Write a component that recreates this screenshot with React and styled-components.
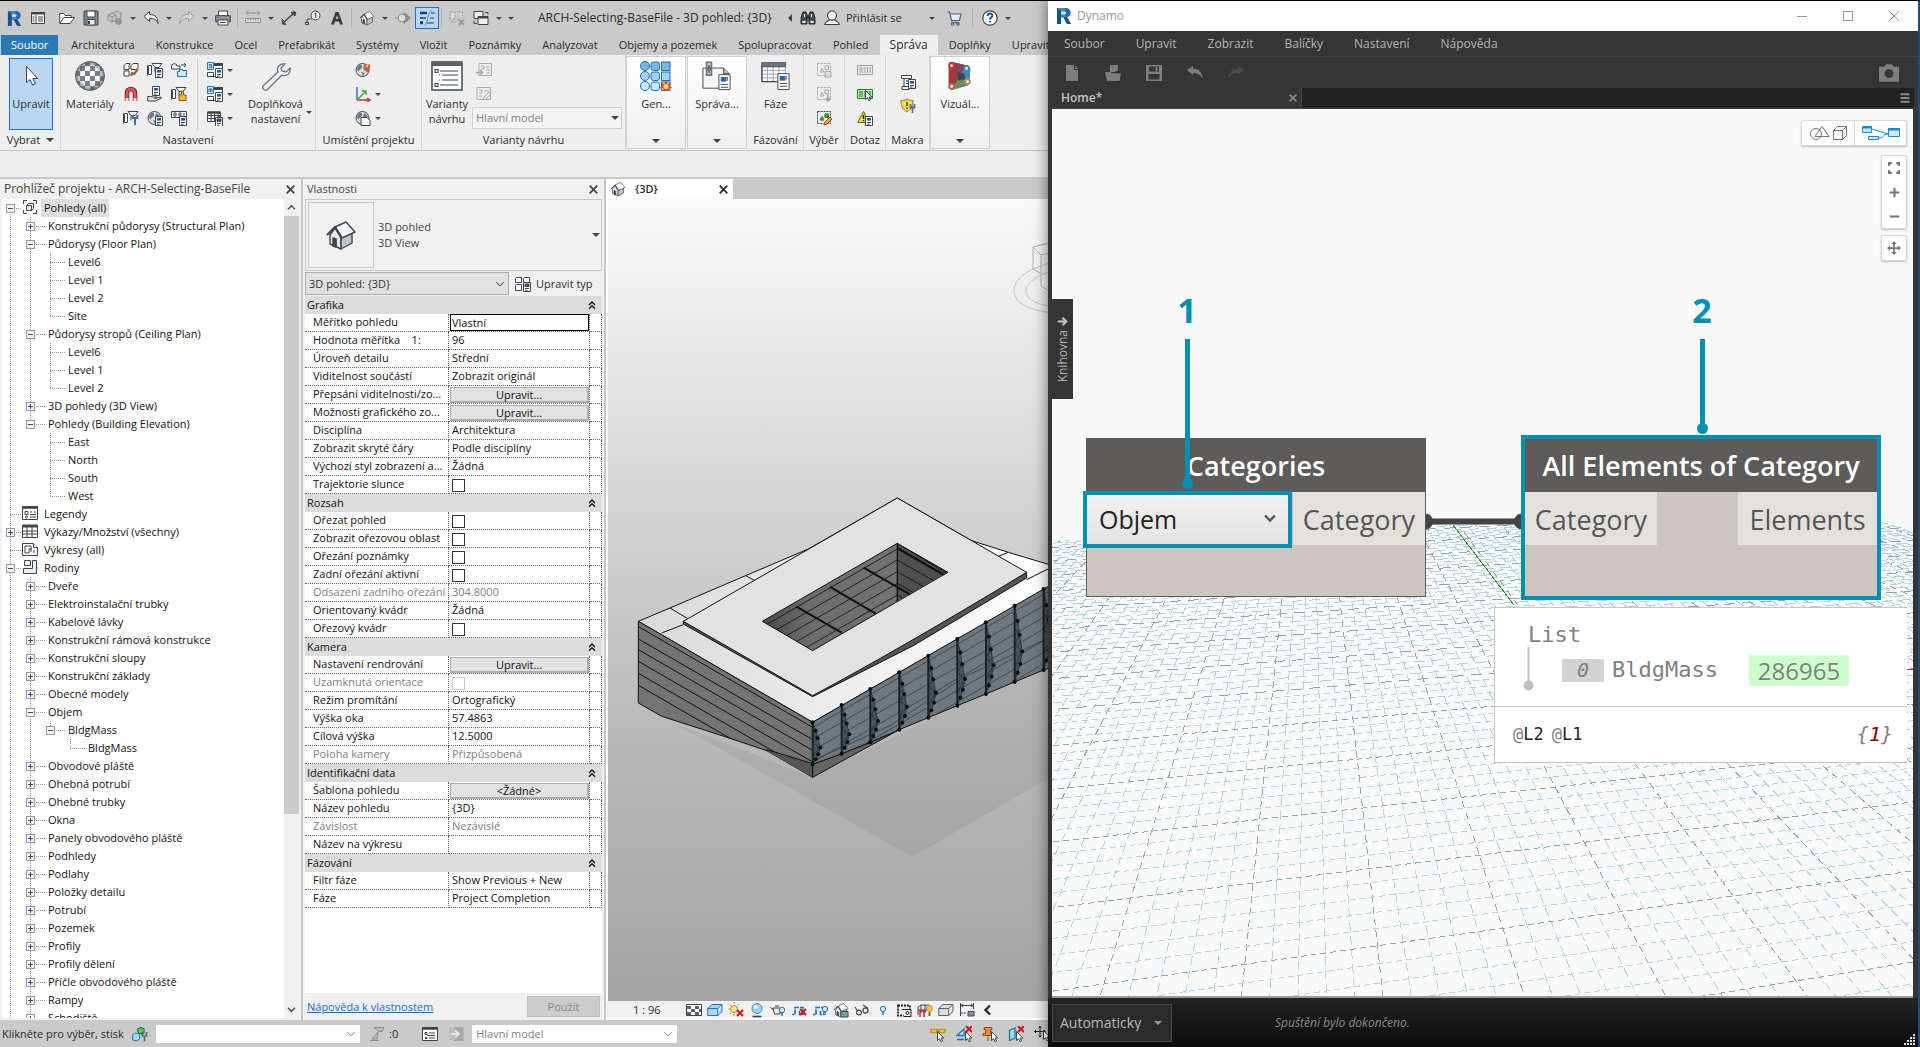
import React, { useState } from 'react';
import styled, { createGlobalStyle, css } from 'styled-components';

const INK = '#3d444d';
const TEAL = '#0490b4';

const GlobalStyle = createGlobalStyle`
  * {
    box-sizing: border-box;
  }
  body {
    margin: 0;
    background: #000;
    font-family: 'Open Sans', 'Noto Sans', sans-serif;
    font-size: 11px;
    line-height: 16px;
    color: #2b2b2b;
  }
  button, input, select {
    font: inherit;
    color: inherit;
  }
  button {
    margin: 0;
    padding: 0;
    border: 0;
    background: none;
    white-space: nowrap;
  }
  svg {
    display: block;
    flex: none;
  }
`;

/* ---------- icons ---------- */

const Badge = ({ x = 8, y = 6 }) => (
  <g transform={`translate(${x} ${y})`}>
    <path d="M.5.5h7v9h-7z" fill="#fff" stroke={INK} />
    <path d="M2 2h4v2.6H2z" fill="#1d5c9e" />
    <path d="M2 6.5h4M2 8.2h2.5" stroke={INK} />
  </g>
);

const Cursor = ({ x = 7, y = 5 }) => (
  <path transform={`translate(${x} ${y})`} d="M.5.5v9l2-1.8 1.4 3 1.6-.7-1.4-2.9h2.7z" fill="#fff" stroke={INK} />
);

const Duct = () => (
  <g fill="#fff" stroke={INK}>
    <path d="M1.5 3.5h3v9h-3zM5 1.5h10l-3 4H8z" />
    <path d="M.5 3.5v10M8 5.5v5" />
  </g>
);

const RedX = ({ x = 9, y = 6 }) => (
  <path transform={`translate(${x} ${y})`} d="M0 0l6 6M6 0l-6 6" stroke="#c8171e" strokeWidth="2" />
);

const Globe = () => (
  <g>
    <circle cx="7.5" cy="8" r="6.500" fill="#dfe3e8" stroke={INK} />
    <path d="M2 6c2-4 6-4 5-1s-3 3-4 5zM9 3l4 3-2 3-3-2zM6 10l4 1-2 3z" fill="#6b7782" />
  </g>
);

const Bulb = ({ x = 9, y = 3 }) => (
  <g transform={`translate(${x} ${y})`}>
    <circle cx="3" cy="3" r="2.700" fill="#d5ecfb" stroke="#1b75bb" />
    <path d="M2 6h2v3H2z" fill="#4a9bd4" />
  </g>
);

const Dashed = ({ c, children }) => (
  <g fill="none" stroke={c}>
    <path d="M1.5 1.5h13v12h-13z" strokeDasharray="2 1" />
    <path d="M4 10l2-3.5L8 10zM9 4h3.5v3.5H9z" />
    {children}
  </g>
);

const SheetS = ({ m }) => (
  <g>
    <path d="M5 1.5h10.5v13H5" fill="#fff" stroke={INK} />
    <path d="M5 1h11v3H5z" fill={INK} />
    <path d="M.5.5h6v7h-6z" fill="#cfe4f7" stroke="#2b71b8" />
    <path d={m ? 'M2 6V3h3v3M3.5 3v3' : 'M5 2.5H2.3V4H5v1.700H2'} fill="none" stroke="#2b71b8" />
    <path d="M.5 10.5h6v4h-6z" fill="#fff" stroke={INK} />
    <Badge x={8} y={6} />
  </g>
);

const House = () => (
  <g stroke={INK} strokeWidth=".7" strokeLinejoin="round">
    <path d="M2.500 8v4.500l5.500 2.500V9.500L5 4.500z" fill="#e4e8ec" />
    <path d="M8 9.500V15l5.500-3V6.500z" fill="#bcc4cc" />
    <path d="M5 4L10.500 1.500 15 6.500 8.500 9.500z" fill="#f8f9fa" />
    <path d="M1 8l4-4 3.500 5.500" fill="none" strokeWidth="1" />
    <path d="M4 9.500v4l1.600.6V10z" fill={INK} />
  </g>
);

const Cube = ({ f = '#a9d6f3', s = '#1b75bb' }) => (
  <g fill={f} stroke={s}>
    <path d="M.7 6.500h10v7H.7zM.7 6.500L5 2.500h10l-4.300 4zM10.700 13.500L15 9.500v-7" />
  </g>
);

const Clamp = () => <path d="M1 12.500h2M4 12.500v-7h8v7h-3.500v-3.500" fill="none" stroke="#2272b4" strokeWidth="1.700" strokeDasharray="5 1" />;

const Barcode = ({ c, f }) => (
  <g fill={f} stroke={c}>
    <path d="M.5 3.500h15v9H.5z" />
    <path d="M3 5v6M5 5v6M8 5v6M10.500 5v6M13 5v6" />
  </g>
);

const PICTURES = {
  revit: (
    <g>
      <path d="M1 0h8c7 0 7 8 2 9l4 7h-4L7.500 9.500H5V16H1z" fill="#3f83c5" />
      <path d="M5 3.500h4c2 0 2 3 0 3H5z" fill="#cfe0f0" />
      <path d="M1 0l4 3.500V16H1zM5 9.500h2.500L11 16h4l-4-7z" fill="#1d4f86" />
      <path d="M9 0c7 0 7 8 2 9l-2-2.500c2-1 2-2.500 0-3z" fill="#2768ab" />
    </g>
  ),
  ui: <g fill="#fff" stroke={INK}><path d="M1.500 2.500h13v11h-13z" /><path d="M1 3.500h14" strokeWidth="2" /><path d="M6 5v8M2.500 7h2M2.500 9h2M2.500 11h2M8 7h5M8 9h5M8 11h5" /></g>,
  open: <g fill="#fff" stroke={INK}><path d="M.7 13V3.500h4l1.500 2h6V7.500" /><path d="M.7 13.500L5 7.500h10.500L11 13.500z" /></g>,
  save: <g stroke={INK}><path d="M1 1h14v14H1z" fill="#7f8994" /><path d="M4 1h8v6H4z" fill="#fff" /><path d="M4 9.500h8V15H4z" fill="#eee" /><path d="M6 11v3" strokeWidth="2" /></g>,
  cubes: <g fill="#c4c4c4" stroke="#8f8f8f"><path d="M1 5l4-2 4 2v5l-4 2-4-2zM1 5l4 2 4-2M5 7v5M6 3l4-2 4 2v5l-3 1.500" /><circle cx="11.500" cy="11.500" r="3" fill="#999" /></g>,
  undo: <path d="M1 6.500L6.500 1.500V4.500c6 0 8.500 3 8.500 9-1.500-4-4-5-8.500-5v3z" fill="#eee" stroke={INK} strokeLinejoin="round" />,
  redo: <path d="M15 6.500L9.500 1.500V4.500C3.500 4.500 1 7.500 1 13.500c1.500-4 4-5 8.500-5v3z" fill="#d8d8d8" stroke="#9a9a9a" strokeLinejoin="round" />,
  print: <g stroke={INK}><path d="M3.500 1h9v5h-9z" fill="#fff" /><path d="M.7 5.700h14.600v6H.7z" fill="#8b949e" /><path d="M3 10h10v5H3z" fill="#fff" /><path d="M5 12.500h6" /></g>,
  dims: <g fill="none" stroke="#8f8f8f"><path d="M1 3h14M3.500 1L1 3l2.500 2M12.500 1L15 3l-2.500 2" /><path d="M.5 8.500h15v4H.5zM3 8.500v2M5.500 8.500v2M8 8.500v2M10.500 8.500v2M13 8.500v2" fill="#ddd" /></g>,
  aligned: <g fill={INK} stroke={INK}><path d="M3 12L12 4" strokeWidth="1.500" /><path d="M1 10.500l4 4-3.500-.5zM14.500 2L10 2.500l4 3.500z" /><path d="M.5 8.500l3 3M12 .5l3 3" /></g>,
  tag: <g fill="none" stroke={INK}><circle cx="10.500" cy="5.500" r="4.500" fill="#eee" /><path d="M9.500 4l1.300-1v5M7 9l-5 0v4" /><path d="M.5 12.500h3v2h-3z" /></g>,
  letterA: <path d="M2 14.500L6.500 2h3L14 14.500h-3L10 11.500H6l-1 3zM6.800 9h2.400L8 5z" fill="#3a3a3a" />,
  house: <House />,
  section: <g fill="#bbb" stroke="#8b8b8b"><path d="M9 2.500L15.500 8 9 13.500z" fill="#8b8b8b" /><circle cx="7" cy="8" r="4" fill="#ddd" /><path d="M0 8h3" /></g>,
  thin: <g fill="none" stroke="#303c49"><path d="M1 2.500h7M1 3.500h7M1 8h6M1 12h3M1 13.500h3" strokeWidth="1.600" /><path d="M12 3h4M11 8h4M8 13h7" /><path d="M12.500.5c-5 4-2 8-6.500 15" stroke="#2f8be0" /></g>,
  hidden: <g fill="#ddd" stroke="#999"><path d="M1 2h5v7H1zM8.500 2h5v4M2 12h5M9 8v2" strokeDasharray="3 1" /><path d="M10 10l5 5M15 10l-5 5" strokeWidth="1.800" /></g>,
  windows: <g fill="#eee" stroke={INK}><path d="M1 1.500h9v7H1z" /><path d="M5 6.500h10v8H5z" /><path d="M5 7.500h10" strokeWidth="2" /><path d="M12 2.500h3v2M1 10.500v3h3" fill="none" /></g>,
  binoc: <g fill="#454c56" stroke="#22262c"><path d="M3 2h3l1 3v9H1V8z" /><path d="M13 2h-3L9 5v9h6V8z" /><path d="M6.500 6h3v3h-3z" /><path d="M2.500 11h3v2h-3zM10.500 11h3v2h-3zM4 4h1v3H4zM11 4h1v3h-1z" fill="#fff" stroke="none" /></g>,
  user: <g fill="#f4f4f4" stroke={INK} strokeWidth="1.200"><path d="M.8 14.500c0-3 3-3 4.500-4.500h5.400c1.500 1.500 4.500 1.500 4.500 4.500z" /><circle cx="8" cy="5.500" r="4.500" /></g>,
  cart: <g fill="#e6ecf6" stroke="#4d5b7c" strokeWidth="1.200"><path d="M1 2h2.500l2 8.500h8L15 4H4" /><path d="M5 12.500h8" /><circle cx="6.500" cy="14" r="1.200" /><circle cx="12" cy="14" r="1.200" /></g>,
  help: <g><circle cx="8" cy="8" r="7.200" fill="#fff" stroke={INK} strokeWidth="1.200" /><path d="M5.500 6c0-3.500 5.500-3 4.800 0C10 7.500 8 7.500 8 9.500M8 11v1.600" fill="none" stroke="#1f55b0" strokeWidth="2" /></g>,
  brush: <g fill="#fff" stroke={INK}><path d="M1 3.500l2-2h4l-1 2v4H1zM8 3.500l2-2h5v4l-2 2H8zM1 9h5v5H1z" /><path d="M8 14l1-3 2 1 4-5" stroke="#a3601e" strokeWidth="2.200" fill="#a3601e" /></g>,
  ductBadge: <g><Duct /><Badge /></g>,
  transfer: <g fill="#cfe6f8" stroke={INK}><path d="M.5 7V3l3-1.500L6 3v1h3v3z" fill="#eee" /><path d="M10 3h5M13 1l2 2-2 2" fill="none" /><path d="M6.500 14.500v-5h2v-2h3v1h4v6z" stroke="#1b75bb" /></g>,
  magnet: <g fill="none"><path d="M4 15V7a4 4 0 018 0v8" stroke="#5a2224" strokeWidth="4.500" /><path d="M4 15V7a4 4 0 018 0v8" stroke="#e05050" strokeWidth="2.800" /><path d="M2.500 13.500h3M10.500 13.500h3" stroke="#f4f4f4" strokeWidth="2.500" /></g>,
  hand: <g><Badge x={5} y={0} /><path d="M.7 10.500h3l3 .5h3l-2 1.500 6-1.500 1 1-6 3H.7z" fill="#d9dee4" stroke={INK} /></g>,
  ductBrush: <g><Duct /><path d="M10.500 5h2v4h2.500v5.500h-7V9h2.500z" fill="#f3b93b" stroke="#8c5d0a" /></g>,
  ductWrench: <g><Duct /><path d="M12 15V9M9.800 5v3h4.500V5" fill="none" stroke="#3b6fa5" strokeWidth="2" /></g>,
  globeBadge: <g><Globe /><Badge /></g>,
  money: <g><path d="M.5 1.500h15v6H.5z" fill="#fff" stroke={INK} /><path d="M3 3v3h2V3zM8 3v3h2V3zM13 3v3" fill="none" stroke={INK} /><Badge /></g>,
  sheetS: <SheetS />,
  sheetM: <SheetS m />,
  gridChart: <g stroke={INK} fill="#fff"><path d="M.5 2.500h13v9H.5zM.5 5.500h13M.5 8.500h13M4 2.500v9M7.500 2.500v9M11 2.500v9" /><path d="M.5 2.500h13" strokeWidth="2.500" /><path d="M12 14V6" stroke="#2468c8" strokeWidth="2" /><path d="M15 14V9" stroke="#d12c2c" strokeWidth="2" /><Badge y={7} /></g>,
  globePin: <g><Globe /><path d="M9 2.500h6V6l-3 5-3-5z" fill="#e8562a" /><circle cx="12" cy="4" r="1" fill="#fff" /></g>,
  axes: <g fill="none" strokeWidth="1.400"><path d="M2 1v13" stroke="#2a62b8" /><path d="M2 14h13M12 12l3 2-3 2" stroke="#d92a2a" /><path d="M2 14L11 5M11 9V5H7" stroke="#2eae36" /></g>,
  globeSheet: <g><Globe /><path d="M6 7.500h6l3 3v5H6z" fill="#fff" stroke={INK} /></g>,
  optAdd: <g fill="#eee" stroke="#aaa"><path d="M3 1.500h12.500v12H3zM5 4h3v3H5M10 5h4M10 8h4M10 11h4" /><path d="M0 10.500h6M4 8l2.500 2.500L4 13" strokeWidth="1.600" /></g>,
  optPick: <g fill="#eee" stroke="#aaa"><path d="M1 1.500h13.500v12H1zM3 4h3v3H3M8 5h5M3 10h3" /><path d="M7 14l1-3 5-5 2 2-5 5z" /></g>,
  selSave: <Dashed c="#a5a5a5"><path d="M9 9.500h6v5.500H9z" fill="#ddd" /></Dashed>,
  selLoad: <Dashed c="#a5a5a5"><path d="M12 8.500v6M9.500 12l2.500 3 2.500-3" strokeWidth="1.800" /></Dashed>,
  selEdit: <g><Dashed c="#3a3f45" /><path d="M4 10l2-3.500L8 10zM9 4h3.500v3.500H9z" fill="#2b9c2e" /><path d="M8 15l1-3 5-5 2 2-5 5z" fill="#f2a23a" stroke="#a5451c" /></g>,
  idGrey: <Barcode c="#a0a0a0" f="#e8e8e8" />,
  idGreen: <g><Barcode c="#1d8a20" f="#b9e8b5" /><Cursor x={8} y={4} /></g>,
  warn: <g><path d="M6.500 1.500l6 11H.7z" fill="#f7dd4a" stroke="#6b5b10" /><path d="M6.500 5v4M6.500 10v1.200" stroke="#222" strokeWidth="1.500" /><Badge x={8} y={6} /></g>,
  macro: <g><path d="M1.500 1.500h10v3H4v8h5v3H2v-3h2M1.500 1.500v3H4M6 7h3M6 9.500h2" fill="#fff" stroke={INK} /><Badge x={8} y={5} /></g>,
  shield: <g><path d="M7 1c-2 1.500-4 1.500-6 1.500 0 6 2 9 6 11.500 4-2.500 6-5.500 6-11.500C11 2.500 9 2.500 7 1z" fill="#f8dc55" stroke="#8d7a2a" /><path d="M7 4v4M7 9.500v1.500" stroke="#444" strokeWidth="1.700" /><path d="M12.500 15v-5M10.500 6v3.500h4V6" fill="none" stroke="#55708d" strokeWidth="1.800" /></g>,
  views: <g fill="none" stroke={INK}><path d="M1.500 5V1.500H5M11 1.500h3.500V5M14.500 11v3.500H11M5 14.500H1.500V11" /><path d="M4.500 6.500h5v5h-5zM4.500 6.500l2-2h5v5l-2 2" fill="#eef1f4" /></g>,
  legend: <g fill="#fff" stroke={INK}><path d="M.5 1.500h15v13H.5z" /><path d="M.5 2.500h15" strokeWidth="2.500" /><path d="M3 6.500h3v3H3zM8 7h2M12 7h2M8 9.500h6M8 12h6" /><circle cx="4.500" cy="12" r="1" /></g>,
  schedule: <g fill="#fff" stroke={INK}><path d="M.5 2.500h15v12H.5zM.5 8h15M.5 11h15M5 4v10M10 4v10" /><path d="M.5 3h15" strokeWidth="3" /></g>,
  sheet: <g fill="#fff" stroke={INK}><path d="M.5 2.500h11l4 4v8H.5z" /><path d="M3 5h6v6M3 5v7h4V8h3M11.500 2.500v4h4M12 9v3" /></g>,
  family: <g fill="#eef1f4" stroke={INK}><path d="M2.500 1.500h6v5h-6zM10.500 1.500h4v13h-13v-5h9z" /></g>,
  typeEdit: <g fill="#fff" stroke={INK}><path d="M.5 2.500l1-1h5v5h-6zM8.500 2.500l1-1h5v5h-6zM.5 9.500l1-1h5v6h-6z" /><Badge y={6} /></g>,
  worksets: <g><path d="M5 3.500l3-2 4 1v5H7z" fill="#5fbf63" stroke="#1d6b22" /><path d="M.7 8.500l3-1.500 4 1v5l-3 2-4-1z" fill="#a9d6f3" stroke="#1b75bb" /><path d="M12.500 15.500V10M10.500 6v4h4V6" fill="none" stroke="#55708d" strokeWidth="1.700" /></g>,
  filter: <g fill="#bbb" stroke="#8b8b8b"><path d="M5 1.500h10l-2 4h-3zM9 6l-6 7h5z" /><path d="M1 14.500h9" /></g>,
  options: <g fill="#fff" stroke={INK}><path d="M.5 1.500h15v13H.5z" /><path d="M.5 2.500h15" strokeWidth="2.500" /><path d="M3 6.500h2v2H3zM7 7h6M5 9.500h8M3 11.500h2v1H3M7 12h6" /></g>,
  addTo: <g><path d="M3 1h12.500v14H6z" fill="#a8a8a8" /><path d="M1 1h6v13H1z" fill="#bcbcbc" /><path d="M3 8h7M7 4.500l4 3.500-4 3.500" stroke="#e8e8e8" strokeWidth="1.800" /></g>,
  detail: <g><path d="M.5 2.500h15v11H.5z" fill="#fff" stroke={INK} /><path d="M1 4h4v3H1zM9 4h4v3H9zM5 7h4v3H5zM1 10h4v3H1zM9 10h4v3H9zM13 7h2v3h-2z" fill="#5a636d" /></g>,
  style: <Cube />,
  sun: <g><circle cx="6" cy="7" r="3.500" fill="#fbe58a" stroke="#c98412" /><path d="M6 0v2M6 12v2M0 7h1.500M1.500 2.500l1.500 1M10 3l1-1M2 12l1-1" stroke="#c98412" /><RedX x={9} y={8} /></g>,
  render: <g><circle cx="8" cy="6.500" r="5" fill="#9fd0f2" stroke="#3a8ac6" /><circle cx="6.500" cy="5" r="2" fill="#eaf6fd" /><path d="M3.500 14.500h9" stroke={INK} strokeWidth="1.600" /></g>,
  teapot: <g><path d="M3 6h7v6H4.500zM.5 5L4 9M5 4h4" fill="#eee" stroke={INK} /><Bulb x={9} y={5} /></g>,
  cropX: <g><Clamp /><RedX x={9} y={7} /></g>,
  crop: <g><Clamp /><Bulb x={10} y={4} /></g>,
  lock: <g><House /><path d="M8 9.500h7V15H8z" fill="#7fa39a" stroke="#30524a" /></g>,
  glasses: <g fill="#dceaf4" stroke={INK} strokeWidth="1.100"><path d="M1 5l3 5M9 3l5 3" /><circle cx="5" cy="10.500" r="2.400" /><circle cx="11.500" cy="8.500" r="2.600" /></g>,
  bulb: <Bulb x={5} y={4} />,
  temp: <g fill="none" stroke="#222"><path d="M2 3.500h12v10H2z" strokeDasharray="2 1" strokeWidth="1.800" /><path d="M6 7.500h9v7H8" fill="#eee" /><circle cx="11.500" cy="11" r="1.500" /></g>,
  analytic: <g fill="none" stroke={INK}><path d="M1 13V5l3-2h8v3M4 3v8M8 3v8M1 8h9" /><path d="M3 15V8M7 15V8M3 9h6" stroke="#c9202a" strokeWidth="1.500" /><circle cx="12.500" cy="6.500" r="3" fill="#ffc54a" stroke="#d8851b" /><path d="M12.500 10v4" stroke="#666" strokeWidth="2" /></g>,
  displace: <Cube f="#d8dde2" s="#5a636d" />,
  constraint: <g fill="none" stroke={INK}><path d="M1.500 1v13M14.500 1v6M2 3.500h12M4 2L2 3.500 4 5M12 2l2 1.500L12 5" /><path d="M2 11h6" strokeDasharray="2 1" /><path d="M9 9.500h6V14H9z" fill="#8a939c" /></g>,
  linkSel: <g><path d="M1 3.500h6v3H1zM9 3.500h6v3H9zM6 5h4" fill="#f6d34c" stroke="#c3960f" strokeWidth="1.500" /><Cursor x={7} y={5} /></g>,
  underlay: <g><path d="M1 9.500L8 3v6.500zM1 13.500h7" fill="#cfe6f8" stroke="#1b75bb" strokeWidth="1.300" /><RedX x={10} y={0} /><Cursor x={9} y={5} /></g>,
  pinSel: <g><path d="M2 1.500h8v2H8.500v4H11v2H1v-2h2.500v-4H2zM6 10v5" fill="#f08a3a" stroke="#9c4514" /><Cursor x={9} y={5} /></g>,
  faceSel: <g><path d="M1.500 4.500L7 2v10l-5.500 2.500z" fill="#a9d6f3" stroke="#1b75bb" strokeWidth="1.300" /><RedX x={10} y={0} /><Cursor x={8} y={5} /></g>,
  dragSel: <g><path d="M6 0v11M.5 5.500h11M4.500 2L6 .5 7.500 2M4.500 9.500L6 11l1.500-1.500M2 4L.5 5.500 2 7M10 4l1.500 1.500" fill="none" stroke="#222" /><Cursor x={9} y={4} /></g>,
  chevron: <path d="M2 5l6 6 6-6" fill="none" stroke="currentColor" strokeWidth="1.600" />,
  up: <path d="M3 10.500l5-5 5 5" fill="none" stroke="currentColor" strokeWidth="2.400" />,
  down: <path d="M3 5.500l5 5 5-5" fill="none" stroke="currentColor" strokeWidth="2.400" />,
  left: <path d="M10 3.500L5.500 8l4.500 4.500" fill="none" stroke="currentColor" strokeWidth="2.400" />,
  close: <path d="M2.500 2.500l11 11M13.500 2.500l-11 11" stroke="currentColor" strokeWidth="2.600" />,
  collapse: <path d="M4 8l4-4 4 4M4 13l4-4 4 4" fill="none" stroke="#111" strokeWidth="1.800" />,
  newFile: <path d="M2 0h8v5h4v11H2zM11 0l3 4h-3z" fill="#7d7d7d" />,
  openFile: <path d="M5 0h8v5l-3 2H5zM0 7h5l2 1 9 .5-1.500 7.500H2z" fill="#7d7d7d" />,
  disk: <path d="M0 0h16v16H0zM3 1.500v5h10v-5zM2.500 9v5.500h11V9zM9.500 2h2v4h-2z" fill="#7d7d7d" fillRule="evenodd" />,
  undoD: <path d="M0 5l6-4v2.500c6 0 9 4 10 10.500-3-5-6-6-10-6V10z" fill="#7d7d7d" />,
  redoD: <path d="M16 5l-6-4v2.500C4 3.500 1 7.500 0 14c3-5 6-6 10-6V10z" fill="#4b4b4b" />,
  camera: <path d="M0 3h4l2-2h4l2 2h4v12H0zM8 5a3.500 3.500 0 100 7 3.500 3.500 0 000-7z" fill="#7d7d7d" fillRule="evenodd" />,
  burger: <path d="M2 3h12M2 8h12M2 13h12" stroke="#8a8a8a" strokeWidth="2.400" />,
  fit: <path d="M1.500 5V1.500H5M11 1.500h3.500V5M14.500 11v3.500H11M5 14.500H1.500V11" fill="none" stroke="#757575" strokeWidth="3" />,
  plus: <path d="M8 1v14M1 8h14" stroke="#757575" strokeWidth="3" />,
  minus: <path d="M1 8h14" stroke="#757575" strokeWidth="3" />,
  pan: <g stroke="#757575" fill="#757575"><path d="M8 3v10M3 8h10" strokeWidth="2" /><path d="M8 0l3 3.500H5zM8 16l3-3.500H5zM0 8l3.500-3v6zM16 8l-3.500-3v6z" stroke="none" /></g>,
  winMin: <path d="M3 8.500h10" stroke="#999" />,
  winMax: <path d="M3.500 3.500h9v9h-9z" fill="none" stroke="#999" />,
  winClose: <path d="M3 3l10 10M13 3L3 13" stroke="#999" />,
  arrow: <path d="M1 8h12M8 2.500L13.500 8 8 13.500" fill="none" stroke="#c5c5c5" strokeWidth="3" />,
};

const Icon = ({ name, size = 16 }) => (
  <svg width={size} height={size} viewBox="0 0 16 16" fill="none" aria-hidden="true">
    {PICTURES[name]}
  </svg>
);

const Materials = () => (
  <svg width="30" height="30" viewBox="0 0 30 30">
    <defs>
      <pattern id="checker" width="10" height="10" patternUnits="userSpaceOnUse">
        <rect width="10" height="10" fill="#f7f8f9" />
        <path d="M0 0h5v5H0zM5 5h5v5H5z" fill="#77818c" />
      </pattern>
      <radialGradient id="ball">
        <stop offset=".6" stopColor="#555" stopOpacity="0" />
        <stop offset="1" stopColor="#555" stopOpacity=".7" />
      </radialGradient>
    </defs>
    <circle cx="15" cy="15" r="14.500" fill="url(#checker)" stroke="#6a727b" />
    <circle cx="15" cy="15" r="14.500" fill="url(#ball)" />
  </svg>
);

const BigPictures = {
  pointer: (
    <svg width="30" height="30" viewBox="0 0 30 30">
      <path d="M10.500 5.500v16l3.500-3 2.500 5.500 2.800-1.200-2.400-5.300h4.600z" fill="#fff" stroke={INK} />
    </svg>
  ),
  materials: <Materials />,
  wrench: (
    <svg width="30" height="30" viewBox="0 0 30 30">
      <path d="M2 25L17 11c-2-5 2-9 7-8l-4 4 1 3 4 1 4-4c1 5-3 9-8 7L6 29c-3 1-5-2-4-4z" fill="#eef0f2" stroke="#6a727b" strokeWidth="1.300" />
    </svg>
  ),
  variants: (
    <svg width="32" height="30" viewBox="0 0 32 30">
      <path d="M1 1h30v28H1z" fill="#fff" stroke={INK} strokeWidth="1.500" />
      <path d="M1 3h30" stroke="#5a636d" strokeWidth="4" />
      <path d="M4 8.500h3v3H4zM4 22.500h3v3H4zM9 10h18M9 24h18M11 14h16M11 19h16M8 14h1M8 19h1" fill="none" stroke={INK} strokeWidth="1.200" />
    </svg>
  ),
  gen: (
    <svg width="32" height="30" viewBox="0 0 32 30">
      <g stroke="#1a6fb5">
        {[0, 1, 2].map((r) => (
          <g key={r} fill={['#79b7df', '#a4d2ef', '#c9e9fa'][r]}>
            <circle cx="5" cy={5 + r * 10} r="4.500" />
            <rect x="11" y={1 + r * 10} width="8.500" height="8.500" rx="2.500" />
            <rect x="21.500" y={1 + r * 10} width="8.500" height="8.500" />
          </g>
        ))}
      </g>
      <path d="M26 19l1.500 4 4-1.500-2 3.500 3 2-4 .5.500 4-3-2.500-3 2.500.5-4-4-.5 3-2-2-3.500 4 1.500z" fill="#e8411c" />
      <circle cx="26" cy="25.500" r="2.500" fill="#ffe14c" />
    </svg>
  ),
  manage: (
    <svg width="32" height="32" viewBox="0 0 32 32">
      <path d="M1 7.500h22l6 6V29H1z" fill="#f7f7f7" stroke={INK} />
      <path d="M23 7.500v6h6" fill="#bbb" stroke={INK} />
      <path d="M5 1.500h5v6H5zM5 9h5v6H5zM7.500 4v9" fill="none" stroke="#6a727b" strokeWidth="2" />
      <path d="M18 14.500h12v16H18z" fill="#fff" stroke={INK} />
      <path d="M20 17h6v5h-6z" fill="#2565a8" />
      <path d="M20 25h8M20 28h8M27 17v4" stroke={INK} />
    </svg>
  ),
  phase: (
    <svg width="32" height="32" viewBox="0 0 32 32">
      <path d="M1 2.500h25V22H1zM1 10h25M1 14h25M1 18h25M7 6v16M13 6v16M19 6v16" fill="#fff" stroke="#9aa1a8" />
      <path d="M1 2h25v4H1zM1 2v20h17" fill="none" stroke={INK} strokeWidth="1.300" />
      <path d="M1 2h25v4H1z" fill="#6a727b" />
      <path d="M18 13.500h12v17H18z" fill="#fff" stroke={INK} />
      <path d="M20 16h6v5h-6z" fill="#2565a8" />
      <path d="M20 24h8M20 27h8M27 16v4" stroke={INK} />
    </svg>
  ),
  dynamo: (
    <svg width="28" height="32" viewBox="0 0 28 32">
      <path d="M3 1h3l17 4 2 3-1 14-2 4-17 5-3-2V3z" fill="#4b4f5e" />
      <path d="M2 3l3-2 8 15L5 31l-3-2z" fill="#a6383d" />
      <path d="M5 1l18 4-10 10z" fill="#8b4160" />
      <path d="M22 5l3 3-1 15-11-8z" fill="#3a8fae" />
      <path d="M13 17l11 6-2 3-17 5z" fill="#6f8a5a" />
      <path d="M11 12l7 1 2 6-8 2z" fill="#3c4454" />
      <g fill="#fff" strokeWidth="2">
        <circle cx="5" cy="5" r="2.500" stroke="#c9333c" />
        <circle cx="21" cy="8" r="2.500" stroke="#2f8fb4" />
        <circle cx="22" cy="22" r="2.500" stroke="#a09555" />
        <circle cx="5" cy="27" r="2.500" stroke="#b06a5d" />
      </g>
    </svg>
  ),
};

/* ---------- shared parts ---------- */

const Caret = styled.i`
  display: block;
  flex: none;
  width: 0;
  height: 0;
  border: ${(p) => p.$size || 3}px solid transparent;
  border-top-color: #444;
  border-bottom: 0;
`;

const IconButton = styled.button`
  display: grid;
  place-items: center;
  flex: none;
  width: ${(p) => p.$w || 24}px;
  height: 24px;
  ${(p) =>
    p.$active &&
    css`
      height: 22px;
      border: 1px solid #1a6fd0;
      background: #b9d7f3;
    `}
`;

const Separator = styled.i`
  width: 1px;
  height: 20px;
  margin: 0 3px 0 2px;
  background: #b2b2b2;
`;

const Spacer = styled.i`
  flex: ${(p) => (p.$w ? `0 0 ${p.$w}px` : '1 1 0')};
`;

const SelectFrame = styled.div`
  position: relative;
  flex: none;
  width: ${(p) => p.$w}px;
  height: ${(p) => p.$h || 18}px;
  background: ${(p) => p.$bg || '#fff'};
  border: 1px solid ${(p) => p.$line || '#fff'};
  color: ${(p) => p.$color || '#808080'};

  select {
    display: block;
    width: 100%;
    height: 100%;
    padding: 0 20px 0 3px;
    appearance: none;
    border: 0;
    background: none;
    outline: 0;
  }
  svg, i {
    position: absolute;
    right: 3px;
    top: calc(50% - 5px);
    pointer-events: none;
  }
  i {
    right: 2px;
    top: calc(50% - 2px);
  }
`;

const DropDown = ({ label, value, caret, ...rest }) => (
  <SelectFrame {...rest}>
    <select aria-label={label} defaultValue={value}>
      <option>{value}</option>
    </select>
    {caret ? <Caret $size={4} /> : <Icon name="chevron" size={10} />}
  </SelectFrame>
);

/* ---------- Revit window ---------- */

const Desktop = styled.div`
  display: grid;
  grid-template-columns: minmax(0, 131fr) minmax(0, 109fr);
  height: 100vh;
  min-height: 700px;
  padding-top: 1px;
`;

const Revit = styled.div`
  display: flex;
  flex-direction: column;
  min-height: 0;
  overflow: hidden;
  background: #cacaca;
`;

const QuickBar = styled.header`
  display: flex;
  align-items: center;
  flex: none;
  height: 34px;
  padding-left: 2px;
  white-space: nowrap;
  overflow: hidden;
`;

const WindowTitle = styled.span`
  width: 246px;
  font-size: 12px;
`;

const Tabs = styled.nav`
  display: flex;
  gap: 1px;
  flex: none;
  height: 20px;
  padding-left: 1px;
  overflow: hidden;
`;

const Tab = styled.button`
  flex: none;
  padding: 0 10px;
  font-size: ${(p) => (p.$current ? 12 : 11)}px;
  ${(p) => p.$file && 'background: #2a7ab5; color: #fff; margin-right: 2px;'}
  ${(p) => p.$current && 'background: #efefef;'}
`;

const Ribbon = styled.div`
  display: flex;
  flex: none;
  height: 96px;
  padding-left: 1px;
  background: #eee;
  border-bottom: 1px solid #c6c6c6;
  overflow: hidden;
`;

const Panel = styled.section`
  display: flex;
  flex-direction: column;
  flex: none;
  width: ${(p) => p.$w}px;
  border-right: 1px solid #d6d6d6;
  ${(p) =>
    p.$raised &&
    css`
      margin: 1px 1px 1px 0;
      border: 1px solid #cfcfcf;
      background: linear-gradient(#fff, #efefef);
    `}
`;

const PanelBody = styled.div`
  display: flex;
  flex: 1;
  padding-top: ${(p) => (p.$raised ? 1 : 3)}px;
`;

const PanelLabel = styled.div`
  display: flex;
  align-items: center;
  justify-content: center;
  gap: 6px;
  height: 19px;
  padding-bottom: 2px;
  white-space: nowrap;
`;

const RaisedMenu = styled(PanelLabel)`
  padding: 5px 0 0;
`;

const BigButton = styled.button`
  display: flex;
  flex-direction: column;
  align-items: center;
  gap: 5px;
  flex: ${(p) => (p.$w ? `0 0 ${p.$w}px` : 1)};
  padding-top: 3px;
  line-height: 15px;
  white-space: pre-line;
  ${(p) =>
    p.$active &&
    css`
      margin: 0 7px 1px 8px;
      padding-top: 2px;
      border: 1px solid #1a6fd0;
      background: #b9d7f3;
    `}
  svg {
    height: 30px;
  }
`;

const SmallGrid = styled.div`
  display: grid;
  grid-template-columns: repeat(${(p) => p.$cols || 1}, 24px);
  grid-auto-rows: 24px;
  align-content: start;
  ${(p) => p.$center && 'margin: 0 auto;'}
  ${(p) => p.$lower && 'padding-top: 12px;'}
`;

const SplitGrid = styled(SmallGrid)`
  grid-template-columns: 24px 8px;
  align-items: center;
  margin-left: ${(p) => p.$ml}px;
`;

const Divider = styled.i`
  width: 1px;
  height: 72px;
  margin: 0 5px 0 6px;
  background: #cfcfcf;
`;

const VariantTools = styled.div`
  display: flex;
  flex-direction: column;
  gap: 1px;
`;

const CaretSlot = styled.span`
  align-self: flex-end;
  margin: 0 3px 17px 0;
`;

const Strip = styled.div`
  flex: none;
  height: 28px;
  background: #eee;
  border-bottom: 2px solid #c8c8c8;
`;

const Workspace = styled.div`
  display: grid;
  grid-template-columns: 303px 303px minmax(0, 1fr);
  flex: 1;
  min-height: 0;
`;

const Dock = styled.section`
  display: flex;
  flex-direction: column;
  min-height: 0;
  padding: 0 2px;
  background: #f0f0f0;
  border-right: 2px solid #c8c8c8;
`;

const DockTitle = styled.header`
  display: flex;
  align-items: center;
  justify-content: space-between;
  flex: none;
  height: 20px;
  padding: 0 3px 0 2px;
  font-size: ${(p) => (p.$wide ? 12 : 11)}px;
  color: #444;
`;

const TreeArea = styled.div`
  display: flex;
  flex: 1;
  min-height: 0;
  margin-bottom: 2px;
  background: #fff;
`;

const Tree = styled.ul`
  flex: 1;
  margin: 0;
  padding: 0;
  list-style: none;
  overflow: hidden;
  color: #111;
`;

const TreeRow = styled.li`
  display: flex;
  height: 18px;
  line-height: 18px;
  white-space: nowrap;
`;

const dots = (dir) => `repeating-linear-gradient(${dir}, #999 0 1px, transparent 1px 2px)`;

const Guide = styled.span`
  flex: none;
  width: ${(p) => p.$w}px;
  padding: 5px 0 0 4px;
  background-repeat: no-repeat;
  background-position: 8px ${(p) => (p.$first ? 9 : 0)}px, 8px 9px;
  background-size: 1px ${(p) => (p.$half ? 9 : 18)}px, ${(p) => (p.$branch ? p.$w - 8 : 0)}px 1px;
  background-image: ${(p) => (p.$line ? dots('180deg') : 'none')}, ${dots('90deg')};
`;

const Toggle = styled.button`
  display: block;
  width: 9px;
  height: 9px;
  border: 1px solid #9a9a9a;
  background:
    linear-gradient(#2f4a9a, #2f4a9a) center / 5px 1px no-repeat,
    linear-gradient(#2f4a9a, #2f4a9a) center / 1px ${(p) => (p.$open ? 0 : 5)}px no-repeat,
    #f4f4f4;
`;

const TreeText = styled.span`
  padding: 0 3px;
  margin-left: ${(p) => (p.$icon ? 3 : 0)}px;
  background: ${(p) => (p.$selected ? '#dedede' : 'none')};
`;

const ScrollTrack = styled.div`
  display: flex;
  flex-direction: column;
  align-items: center;
  flex: none;
  width: 15px;
  background: #f0f0f0;
  color: #555;
`;

const ScrollArrow = styled.button`
  display: grid;
  place-items: center;
  width: 15px;
  height: 17px;
`;

const ScrollThumb = styled.i`
  flex: 0 0 73%;
  width: 15px;
  margin-bottom: auto;
  background: #cbcbcb;
`;

const TREE = [
  [0, '-', 'Pohledy (all)', 'views'],
  [1, '+', 'Konstrukční půdorysy (Structural Plan)'],
  [1, '-', 'Půdorysy (Floor Plan)'],
  [2, '', 'Level6'],
  [2, '', 'Level 1'],
  [2, '', 'Level 2'],
  [2, '', 'Site'],
  [1, '-', 'Půdorysy stropů (Ceiling Plan)'],
  [2, '', 'Level6'],
  [2, '', 'Level 1'],
  [2, '', 'Level 2'],
  [1, '+', '3D pohledy (3D View)'],
  [1, '-', 'Pohledy (Building Elevation)'],
  [2, '', 'East'],
  [2, '', 'North'],
  [2, '', 'South'],
  [2, '', 'West'],
  [0, '', 'Legendy', 'legend'],
  [0, '+', 'Výkazy/Množství (všechny)', 'schedule'],
  [0, '', 'Výkresy (all)', 'sheet'],
  [0, '-', 'Rodiny', 'family'],
  [1, '+', 'Dveře'],
  [1, '+', 'Elektroinstalační trubky'],
  [1, '+', 'Kabelové lávky'],
  [1, '+', 'Konstrukční rámová konstrukce'],
  [1, '+', 'Konstrukční sloupy'],
  [1, '+', 'Konstrukční základy'],
  [1, '+', 'Obecné modely'],
  [1, '-', 'Objem'],
  [2, '-', 'BldgMass'],
  [3, '', 'BldgMass'],
  [1, '+', 'Obvodové pláště'],
  [1, '+', 'Ohebná potrubí'],
  [1, '+', 'Ohebné trubky'],
  [1, '+', 'Okna'],
  [1, '+', 'Panely obvodového pláště'],
  [1, '+', 'Podhledy'],
  [1, '+', 'Podlahy'],
  [1, '+', 'Položky detailu'],
  [1, '+', 'Potrubí'],
  [1, '+', 'Pozemek'],
  [1, '+', 'Profily'],
  [1, '+', 'Profily dělení'],
  [1, '+', 'Příčle obvodového pláště'],
  [1, '+', 'Rampy'],
  [1, '+', 'Schodiště'],
];

// true when another row of the same level follows under the same parent
const continues = (index, level) => {
  for (let i = index + 1; i < TREE.length; i += 1) {
    if (TREE[i][0] < level) return false;
    if (TREE[i][0] === level) return true;
  }
  return level < 2;
};

const ProjectTree = () => (
  <Tree>
    {TREE.map(([level, toggle, text, icon], i) => (
      <TreeRow key={i}>
        {Array.from({ length: level + 1 }, (_, col) => {
          const own = col === level;
          const more = continues(i, col);
          return (
            <Guide key={col} $w={own && level ? 23 : 20} $line={own || more} $half={own && !more} $first={i === 0} $branch={own}>
              {own && toggle && <Toggle $open={toggle === '-'} aria-label={text} />}
            </Guide>
          );
        })}
        {icon && <Icon name={icon} />}
        <TreeText $icon={icon} $selected={i === 0}>{text}</TreeText>
      </TreeRow>
    ))}
  </Tree>
);

const TypeBox = styled.div`
  display: flex;
  align-items: center;
  flex: none;
  height: 72px;
  padding: 2px 1px 2px 2px;
  border: 1px solid #c8c8c8;
  color: #444;
`;

const TypeThumb = styled.div`
  display: grid;
  place-items: center;
  width: 66px;
  height: 66px;
  margin-right: 4px;
  border: 1px solid #c8c8c8;
`;

const TypeRow = styled.div`
  display: flex;
  align-items: center;
  flex: none;
  height: 25px;
`;

const EditType = styled.button`
  display: flex;
  align-items: center;
  gap: 5px;
  margin-left: 6px;
`;

const TableArea = styled.div`
  flex: 1;
  min-height: 0;
  overflow: hidden;
  background: #fff;
`;

const PropTable = styled.table`
  width: 100%;
  table-layout: fixed;
  border-collapse: separate;
  border-spacing: 0;
  color: #111;
  white-space: nowrap;

  td, th {
    height: 18px;
    padding: 0;
    text-align: left;
    vertical-align: top;
    font-weight: 400;
    line-height: 16px;
    overflow: hidden;
  }
`;

const GroupHead = styled.th`
  background: #dcdcdc;

  div {
    display: flex;
    align-items: center;
    justify-content: space-between;
    height: 18px;
    padding: 0 4px 0 2px;
  }
`;

const PropRow = styled.tr`
  color: ${(p) => (p.$dim ? '#808080' : '#111')};

  th, td {
    border-bottom: 1px dotted #666;
    border-right: 1px dotted #666;
  }
  th {
    padding-left: 8px;
  }
  td:nth-child(2) {
    padding-left: ${(p) => (p.$flush ? 1 : 3)}px;
  }
`;

const ValueInput = styled.input`
  display: block;
  width: 100%;
  height: 17px;
  padding: 0 1px;
  border: 1px solid #000;
`;

const ValueButton = styled.button`
  display: block;
  width: 100%;
  height: 16px;
  margin-top: 1px;
  line-height: 14px;
  background: #e1e1e1;
  border: 1px solid #adadad;
  border-bottom-width: 2px;
  border-right-width: 2px;
`;

const Check = styled.input`
  display: block;
  appearance: none;
  width: 13px;
  height: 13px;
  margin: 3px 0 0;
  border: 1px solid #333;
  background: #fff;

  &:disabled {
    border-color: #ccc;
  }
`;

const DockFooter = styled.footer`
  display: flex;
  align-items: center;
  justify-content: space-between;
  flex: none;
  height: 27px;
  padding: 0 2px;

  a {
    color: #0f6fd0;
  }
`;

const ApplyButton = styled.button`
  width: 73px;
  height: 21px;
  background: #ccc;
  border: 1px solid #bfbfbf;
  color: #868686;
`;

const PROPS = [
  ['Grafika', [
    ['Měřítko pohledu', 'input', 'Vlastní'],
    ['Hodnota měřítka\u00a0\u00a0\u00a0 1:', 'text', '96'],
    ['Úroveň detailu', 'text', 'Střední'],
    ['Viditelnost součástí', 'text', 'Zobrazit originál'],
    ['Přepsání viditelnosti/zo...', 'button', 'Upravit...'],
    ['Možnosti grafického zo...', 'button', 'Upravit...'],
    ['Disciplína', 'text', 'Architektura'],
    ['Zobrazit skryté čáry', 'text', 'Podle disciplíny'],
    ['Výchozí styl zobrazení a...', 'text', 'Žádná'],
    ['Trajektorie slunce', 'check'],
  ]],
  ['Rozsah', [
    ['Ořezat pohled', 'check'],
    ['Zobrazit ořezovou oblast', 'check'],
    ['Ořezání poznámky', 'check'],
    ['Zadní ořezání aktivní', 'check'],
    ['Odsazení zadního ořezání', 'text', '304.8000', true],
    ['Orientovaný kvádr', 'text', 'Žádná'],
    ['Ořezový kvádr', 'check'],
  ]],
  ['Kamera', [
    ['Nastavení rendrování', 'button', 'Upravit...'],
    ['Uzamknutá orientace', 'check', '', true],
    ['Režim promítání', 'text', 'Ortografický'],
    ['Výška oka', 'text', '57.4863'],
    ['Cílová výška', 'text', '12.5000'],
    ['Poloha kamery', 'text', 'Přizpůsobená', true],
  ]],
  ['Identifikační data', [
    ['Šablona pohledu', 'button', '<Žádné>'],
    ['Název pohledu', 'text', '{3D}'],
    ['Závislost', 'text', 'Nezávislé', true],
    ['Název na výkresu', 'text', ''],
  ]],
  ['Fázování', [
    ['Filtr fáze', 'text', 'Show Previous + New'],
    ['Fáze', 'text', 'Project Completion'],
  ]],
];

const PropValue = ({ id, kind, value, dim }) => {
  if (kind === 'input') return <ValueInput id={id} defaultValue={value} />;
  if (kind === 'button') return <ValueButton id={id}>{value}</ValueButton>;
  if (kind === 'check') return <Check id={id} type="checkbox" disabled={dim} />;
  return value;
};

const PropertyTable = () => (
  <PropTable>
    <colgroup>
      <col style={{ width: 144 }} />
      <col />
      <col style={{ width: 12 }} />
    </colgroup>
    {PROPS.map(([group, rows], g) => (
      <tbody key={group}>
        <tr>
          <GroupHead colSpan={3}>
            <div>{group}<Icon name="collapse" size={12} /></div>
          </GroupHead>
        </tr>
        {rows.map(([name, kind, value, dim], r) => {
          const id = `prop-${g}-${r}`;
          return (
            <PropRow key={id} $dim={dim} $flush={kind === 'input' || kind === 'button'}>
              <th scope="row">{kind === 'text' ? name : <label htmlFor={id}>{name}</label>}</th>
              <td><PropValue id={id} kind={kind} value={value} dim={dim} /></td>
              <td />
            </PropRow>
          );
        })}
      </tbody>
    ))}
  </PropTable>
);

const ViewArea = styled.section`
  display: flex;
  flex-direction: column;
  min-width: 0;
  min-height: 0;
  overflow: hidden;
`;

const ViewTab = styled.header`
  display: flex;
  align-items: center;
  gap: 9px;
  flex: none;
  width: 127px;
  height: 20px;
  padding: 0 4px;
  background: #fff;
  font-weight: 600;

  button {
    margin-left: auto;
  }
`;

const Scene = styled.div`
  flex: 1;
  min-height: 0;
  border-left: 2px solid #fff;
  background: linear-gradient(#fafafa, #dadada 32%, #b8b8b8 68%, #a4a4a4);

  svg {
    width: 100%;
    height: 100%;
  }
`;

const ViewControls = styled.footer`
  display: flex;
  align-items: center;
  flex: none;
  height: 19px;
  padding-left: 27px;
  background: #f0f0f0;
  border-bottom: 2px solid #fff;

  button {
    flex: none;
    width: 21px;
    height: 16px;
  }
`;

const ViewScale = styled.span`
  width: 53px;
  white-space: pre;
`;

const StatusBar = styled.footer`
  display: flex;
  align-items: center;
  flex: none;
  height: 27px;
  padding-left: 2px;
  white-space: nowrap;
  overflow: hidden;
`;

const StatusHint = styled.span`
  width: 126px;
`;

const SelectTools = styled.div`
  display: flex;
  margin-right: -7px;
`;

// x, top and bottom of each facade mullion
const MULLIONS = [
  [638, 790, 916], [725, 738, 884], [811, 690, 850], [898, 640, 812], [985, 590, 776],
  [1072, 540, 740], [1158, 490, 705], [1244, 440, 669], [1331, 390, 633],
];

const Mullion = ({ x, top, bottom }) => {
  const h = bottom - top;
  const nodes = [[0, 0], [9, 0.2], [15, 0.38], [23, 0.6], [17, 0.76], [9, 0.88], [0, 1]];
  const pts = nodes.map(([dx, t]) => [x + dx, top + h * t]);
  return (
    <g stroke="#1b2429">
      <path d={`M${pts.map((p) => p.join(' ')).join('L')}z`} fill="#303c42" fillOpacity=".6" strokeWidth="2" />
      <path d={`M${x} ${top}v${h}`} strokeWidth="6" />
      <path d={`M${x} ${top + h * 0.3}L${x + 15} ${top + h * 0.38}L${x} ${top + h * 0.5}L${x + 23} ${top + h * 0.6}L${x} ${top + h * 0.8}`} fill="none" strokeWidth="2" />
      {pts.map(([px, py]) => (
        <circle key={py} cx={px} cy={py} r="6" fill="#0b0f11" stroke="none" />
      ))}
    </g>
  );
};

const FACADE = `M638 790L1352 378V625L${MULLIONS.slice().reverse().map(([x, , b]) => `${x} ${b}`).join('L')}z`;

const Building = () => (
  <svg viewBox="608 200 440 802" preserveAspectRatio="xMidYMid slice">
    <defs>
      <clipPath id="leftFace">
        <path d="M115 487L638 790V955L500 875L375 833L185 772L115 732z" />
      </clipPath>
      <clipPath id="facade"><path d={FACADE} /></clipPath>
      <clipPath id="court"><path d="M487 487L892 253L1044 340L638 575z" /></clipPath>
      <linearGradient id="courtWall" x1="0" x2="1">
        <stop offset="0" stopColor="#4a4a4a" />
        <stop offset=".25" stopColor="#6c6c6c" />
        <stop offset=".8" stopColor="#747474" />
        <stop offset="1" stopColor="#555" />
      </linearGradient>
      <linearGradient id="roof" x1="0" x2="1">
        <stop offset="0" stopColor="#d9d9d9" />
        <stop offset=".5" stopColor="#ededed" />
        <stop offset="1" stopColor="#fff" />
      </linearGradient>
    </defs>

    <g fill="none" stroke="#b0b0b0">
      <path d="M1041 256v31l14 8M1033 248l21-5M1033 248v22l7 4M1033 248l8 8 14-3" fill="#f4f4f4" />
      <path d="M1050 264c-14 4-36 12-36 28 0 12 17 20 40 22M1052 272c-10 3-26 10-26 20 0 9 12 14 28 16" stroke="#c2c2c2" />
    </g>

    <g transform="translate(600 460) scale(.3333)" stroke="#111" strokeWidth="3" strokeLinejoin="round">
      <path d="M220 792L937 1193L1352 955V600L638 955z" fill="#000" fillOpacity=".05" stroke="none" />
      <path d="M115 487L210 447L437 350L625 270L892 117L1115 245L1225 280L1352 318V380L638 790z" fill="url(#roof)" />
      <path d="M210 447L262 478M437 350L465 365M1225 280L1195 292M185 522L250 497M1280 362L1352 326" fill="none" />

      <path d="M115 487L638 790V955L500 875L375 833L185 772L115 732z" fill="#747474" />
      <g clipPath="url(#leftFace)">
        {[503, 540, 572, 607, 643, 679].map((y) => (
          <path key={y} d={`M115 ${y}L638 ${y + 302}`} />
        ))}
        <path d="M500 872L560 890L638 914V960L500 880z" fill="#555" />
      </g>
      <path d="M638 916L725 884L811 850L898 812L638 955z" fill="#646464" />

      <path d={FACADE} fill="#6d7880" />
      <g clipPath="url(#facade)" stroke="#2c363b" strokeWidth="2">
        {[16, 50, 85, 120, 155, 190, 225, 260].map((d) => (
          <path key={d} d={`M638 ${790 + d}L1352 ${378 + d}`} />
        ))}
        <path d="M638 905L870 800L1100 650L1352 535" fill="none" />
      </g>
      {MULLIONS.map(([x, top, bottom]) => (
        <Mullion key={x} x={x} top={top} bottom={bottom} />
      ))}

      <path d="M250 487v8L638 713L940 560L1280 357V340z" fill="#555" />
      <path d="M892 117L1280 340Q900 570 638 710L250 487z" fill="#e2e2e2" />
      <path d="M487 487L892 253L1044 340L638 575z" fill="url(#courtWall)" />
      <g clipPath="url(#court)">
        <path d="M892 253V430L1044 345z" fill="#4f4f4f" />
        {[17, 50, 85, 120, 155].map((d) => (
          <path key={d} d={`M487 ${487 + d}L892 ${253 + d}L1044 ${340 + d}`} fill="none" strokeWidth="2.500" />
        ))}
        <path d="M892 253V430" />
        <path d="M589 443L726 522M690 384L827 464M791 326L940 412M892 267L1040 352" strokeWidth="6" />
      </g>
    </g>
  </svg>
);

const TOP_TABS = [
  'Architektura', 'Konstrukce', 'Ocel', 'Prefabrikát', 'Systémy', 'Vložit', 'Poznámky',
  'Analyzovat', 'Objemy a pozemek', 'Spolupracovat', 'Pohled', 'Správa', 'Doplňky', 'Upravit',
];

const QUICK = [
  'open', 'save', 'cubes', '>', 'undo', '>', 'redo', '>', 'print', '|', 'dims', '>', 'aligned', 'tag',
  'letterA', '|', 'house', '>', 'section', 'thin', '|', 'hidden', 'windows', '>', '>',
];

const VIEW_ICONS = [
  'detail', 'style', 'sun', 'render', 'teapot', 'cropX', 'crop', 'lock', 'glasses', 'bulb', 'temp',
  'analytic', 'displace', 'constraint', 'left',
];

const ToolIcons = ({ names }) =>
  names.map((name) => (
    <IconButton key={name} aria-label={name}><Icon name={name} /></IconButton>
  ));

const QuickAccess = () => (
  <QuickBar>
    <IconButton aria-label="Revit"><Icon name="revit" size={15} /></IconButton>
    <IconButton aria-label="ui"><Icon name="ui" /></IconButton>
    <Spacer $w={5} />
    {QUICK.map((name, i) => {
      if (name === '|') return <Separator key={i} />;
      if (name === '>') return <IconButton key={i} $w={12} aria-label="menu"><Caret /></IconButton>;
      return <IconButton key={i} $active={name === 'thin'} aria-label={name}><Icon name={name} /></IconButton>;
    })}
    <Spacer $w={21} />
    <WindowTitle>ARCH-Selecting-BaseFile - 3D pohled: {'{3D}'}</WindowTitle>
    <IconButton $w={12} aria-label="search"><svg width="4" height="8"><path d="M4 0v8L0 4z" fill="#444" /></svg></IconButton>
    <IconButton aria-label="find"><Icon name="binoc" /></IconButton>
    <IconButton aria-label="user"><Icon name="user" /></IconButton>
    <Spacer $w={2} />
    <button>Přihlásit se</button>
    <Spacer $w={24} />
    <IconButton $w={12} aria-label="account"><Caret /></IconButton>
    <Spacer $w={4} />
    <IconButton aria-label="cart"><Icon name="cart" /></IconButton>
    <Spacer $w={4} />
    <Separator />
    <Spacer $w={2} />
    <IconButton aria-label="help"><Icon name="help" /></IconButton>
    <IconButton $w={12} aria-label="help menu"><Caret /></IconButton>
  </QuickBar>
);

const RaisedPanel = ({ picture, label }) => (
  <Panel $w={60} $raised>
    <PanelBody $raised>
      <BigButton>{BigPictures[picture]}{label}</BigButton>
    </PanelBody>
    <RaisedMenu><Caret $size={4} /></RaisedMenu>
  </Panel>
);

const RibbonArea = () => (
  <Ribbon>
    <Panel $w={60}>
      <PanelBody>
        <BigButton $active>{BigPictures.pointer}Upravit</BigButton>
      </PanelBody>
      <PanelLabel>Vybrat <Caret $size={4} /></PanelLabel>
    </Panel>
    <Panel $w={255}>
      <PanelBody>
        <BigButton $w={58}>{BigPictures.materials}Materiály</BigButton>
        <SmallGrid $cols={3}>
          <ToolIcons names={['brush', 'ductBadge', 'transfer', 'magnet', 'hand', 'ductBrush', 'ductWrench', 'globeBadge', 'money']} />
        </SmallGrid>
        <Divider />
        <SplitGrid $ml={0}>
          {['sheetS', 'sheetM', 'gridChart'].map((name) => (
            <React.Fragment key={name}>
              <ToolIcons names={[name]} />
              <Caret />
            </React.Fragment>
          ))}
        </SplitGrid>
        <Spacer $w={10} />
        <BigButton>{BigPictures.wrench}{'Doplňková\nnastavení'}</BigButton>
        <CaretSlot><Caret /></CaretSlot>
      </PanelBody>
      <PanelLabel>Nastavení</PanelLabel>
    </Panel>
    <Panel $w={106}>
      <PanelBody>
        <SplitGrid $ml={35}>
          <ToolIcons names={['globePin']} />
          <i />
          <ToolIcons names={['axes']} />
          <Caret />
          <ToolIcons names={['globeSheet']} />
          <Caret />
        </SplitGrid>
      </PanelBody>
      <PanelLabel>Umístění projektu</PanelLabel>
    </Panel>
    <Panel $w={204}>
      <PanelBody>
        <BigButton $w={50}>{BigPictures.variants}{'Varianty\nnávrhu'}</BigButton>
        <VariantTools>
          <SmallGrid><ToolIcons names={['optAdd', 'optPick']} /></SmallGrid>
          <DropDown label="Varianta" value="Hlavní model" caret $w={150} $h={22} $bg="#f4f4f4" $line="#cfcfcf" />
        </VariantTools>
      </PanelBody>
      <PanelLabel>Varianty návrhu</PanelLabel>
    </Panel>
    <RaisedPanel picture="gen" label="Gen..." />
    <RaisedPanel picture="manage" label="Správa..." />
    <Panel $w={56}>
      <PanelBody><BigButton>{BigPictures.phase}Fáze</BigButton></PanelBody>
      <PanelLabel>Fázování</PanelLabel>
    </Panel>
    <Panel $w={41}>
      <PanelBody><SmallGrid $center><ToolIcons names={['selSave', 'selLoad', 'selEdit']} /></SmallGrid></PanelBody>
      <PanelLabel>Výběr</PanelLabel>
    </Panel>
    <Panel $w={41}>
      <PanelBody><SmallGrid $center><ToolIcons names={['idGrey', 'idGreen', 'warn']} /></SmallGrid></PanelBody>
      <PanelLabel>Dotaz</PanelLabel>
    </Panel>
    <Panel $w={44}>
      <PanelBody><SmallGrid $center $lower><ToolIcons names={['macro', 'shield']} /></SmallGrid></PanelBody>
      <PanelLabel>Makra</PanelLabel>
    </Panel>
    <RaisedPanel picture="dynamo" label="Vizuál..." />
  </Ribbon>
);

const RevitWindow = () => (
  <Revit>
    <QuickAccess />
    <Tabs>
      <Tab $file>Soubor</Tab>
      {TOP_TABS.map((t) => <Tab key={t} $current={t === 'Správa'}>{t}</Tab>)}
    </Tabs>
    <RibbonArea />
    <Strip />
    <Workspace>
      <Dock>
        <DockTitle $wide>
          Prohlížeč projektu - ARCH-Selecting-BaseFile
          <button aria-label="Zavřít prohlížeč"><Icon name="close" size={11} /></button>
        </DockTitle>
        <TreeArea>
          <ProjectTree />
          <ScrollTrack>
            <ScrollArrow aria-label="Nahoru"><Icon name="up" size={11} /></ScrollArrow>
            <ScrollThumb />
            <ScrollArrow aria-label="Dolů"><Icon name="down" size={11} /></ScrollArrow>
          </ScrollTrack>
        </TreeArea>
      </Dock>
      <Dock>
        <DockTitle>
          Vlastnosti
          <button aria-label="Zavřít vlastnosti"><Icon name="close" size={11} /></button>
        </DockTitle>
        <TypeBox>
          <TypeThumb><Icon name="house" size={32} /></TypeThumb>
          <div>3D pohled<br />3D View</div>
          <Spacer />
          <Caret $size={4} />
        </TypeBox>
        <TypeRow>
          <DropDown label="Typ" value="3D pohled: {3D}" $w={204} $h={23} $bg="#e1e1e1" $line="#adadad" $color="#333" />
          <EditType><Icon name="typeEdit" />Upravit typ</EditType>
        </TypeRow>
        <TableArea><PropertyTable /></TableArea>
        <DockFooter>
          <a href="#help">Nápověda k vlastnostem</a>
          <ApplyButton disabled>Použít</ApplyButton>
        </DockFooter>
      </Dock>
      <ViewArea>
        <ViewTab>
          <Icon name="house" />
          {'{3D}'}
          <button aria-label="Zavřít pohled"><Icon name="close" size={11} /></button>
        </ViewTab>
        <Scene><Building /></Scene>
        <ViewControls>
          <ViewScale>1 : 96</ViewScale>
          {VIEW_ICONS.map((name) => (
            <button key={name} aria-label={name}><Icon name={name} /></button>
          ))}
        </ViewControls>
      </ViewArea>
    </Workspace>
    <StatusBar>
      <StatusHint>Klikněte pro výběr, stisk</StatusHint>
      <IconButton aria-label="worksets"><Icon name="worksets" /></IconButton>
      <Spacer $w={4} />
      <DropDown label="Pracovní sada" value="" $w={204} />
      <Spacer $w={5} />
      <IconButton aria-label="filter"><Icon name="filter" /></IconButton>
      :0
      <Spacer $w={20} />
      <IconButton aria-label="options"><Icon name="options" /></IconButton>
      <Spacer $w={2} />
      <IconButton aria-label="add"><Icon name="addTo" /></IconButton>
      <Spacer $w={4} />
      <DropDown label="Aktivní varianta" value="Hlavní model" $w={205} />
      <Spacer />
      <SelectTools>
        {['linkSel', 'underlay', 'pinSel', 'faceSel', 'dragSel'].map((name) => (
          <IconButton key={name} $w={26} aria-label={name}><Icon name={name} /></IconButton>
        ))}
      </SelectTools>
    </StatusBar>
  </Revit>
);

/* ---------- Dynamo window ---------- */

const Dynamo = styled.div`
  position: relative;
  display: flex;
  flex-direction: column;
  min-height: 0;
  background: #353535;
  border-right: 2px solid #17507f;
  box-shadow: 0 0 14px rgba(0, 0, 0, 0.55);
  font-size: 12px;
  color: #b4b4b4;
`;

const DynTitle = styled.header`
  display: flex;
  align-items: center;
  gap: 5px;
  flex: none;
  height: 30px;
  padding: 0 4px 0 8px;
  background: #fff;
  color: #999;
`;

const WindowButton = styled.button`
  display: grid;
  place-items: center;
  width: 41px;
  height: 30px;
`;

const DynMenu = styled.nav`
  display: flex;
  align-items: center;
  gap: 31px;
  flex: none;
  height: 26px;
  padding-left: 16px;
  border-bottom: 1px solid #414141;
`;

const DynTools = styled.div`
  display: flex;
  align-items: center;
  flex: none;
  height: 31px;
  padding: 0 9px 0 3px;
`;

const DynTool = styled.button`
  display: grid;
  place-items: center;
  width: ${(p) => p.$w || 41}px;
`;

const DynTabs = styled.div`
  display: flex;
  align-items: center;
  flex: none;
  height: 21px;
  margin: 0 4px;
  padding-right: 3px;
  background: #222;
  border-bottom: 1px solid #414141;
`;

const DynTab = styled.div`
  display: flex;
  align-items: center;
  justify-content: space-between;
  width: 250px;
  height: 20px;
  margin-right: auto;
  padding: 0 3px 0 9px;
  background: #353535;
  border-right: 1px solid #484848;
  font-weight: 600;
  color: #c4c4c4;

  button {
    color: #8a8a8a;
  }
`;

const Canvas = styled.main`
  position: relative;
  flex: 1;
  min-height: 0;
  margin: 0 5px 0 4px;
  overflow: hidden;
  background: #f9f9f9;
  border-bottom: 2px solid #9a9a9a;
`;

const Backdrop = styled.svg`
  position: absolute;
  left: 0;
  top: 0;
`;

const LibraryTab = styled.button`
  position: absolute;
  left: 0;
  top: 190px;
  display: flex;
  flex-direction: column;
  align-items: center;
  justify-content: center;
  gap: 3px;
  width: 21px;
  height: 100px;
  background: #353535;
  color: #b4b4b4;

  span {
    writing-mode: vertical-rl;
    transform: rotate(180deg);
  }
`;

const Controls = styled.div`
  position: absolute;
  right: 6px;
  top: 11px;
  display: flex;
  flex-direction: column;
  align-items: flex-end;
  gap: 6px;
`;

const ControlGroup = styled.div`
  display: flex;
  flex-direction: ${(p) => (p.$row ? 'row' : 'column')};
  margin-bottom: ${(p) => (p.$row ? 3 : 0)}px;
  background: #fff;
  border: 1px solid #d8d8d8;
  border-radius: 2px;
  box-shadow: 0 1px 2px rgba(0, 0, 0, 0.25);

  button {
    display: grid;
    place-items: center;
    width: ${(p) => (p.$row ? 52 : 24)}px;
    height: 24px;
  }
  button + button {
    border-left: ${(p) => (p.$row ? '1px solid #d8d8d8' : '0')};
  }
`;

const Node = styled.section`
  position: absolute;
  left: ${(p) => p.$x}px;
  top: ${(p) => p.$y}px;
  width: ${(p) => p.$w}px;
  height: ${(p) => (p.$selected ? 165 : 159)}px;
  border: ${(p) => (p.$selected ? `4px solid ${TEAL}` : '1px solid #5e5c5a')};
  background: #cbc6bf;
`;

const NodeTitle = styled.h2`
  margin: 0;
  height: 53px;
  padding-top: 1px;
  background: #5e5c5a;
  color: #fff;
  font-size: 27px;
  font-weight: 600;
  line-height: 52px;
  text-align: center;
  white-space: nowrap;
`;

const NodePorts = styled.div`
  display: flex;
  justify-content: ${(p) => (p.$end ? 'flex-end' : 'space-between')};
`;

const Port = styled.span`
  height: 53px;
  width: ${(p) => p.$w}px;
  padding-top: 2px;
  background: #e4e1dc;
  color: #555;
  font-size: 27px;
  line-height: 52px;
  text-align: center;
`;

const CategorySelect = styled(SelectFrame)`
  position: absolute;
  left: 31px;
  top: 382px;
  border: 4px solid ${TEAL};
  background: linear-gradient(#f2f2f2, #e2e2e2);
  color: #222;
  font-size: 25px;

  select {
    padding: 0 30px 2px 12px;
    line-height: 44px;
  }
  svg {
    right: 10px;
    top: 15px;
    color: #555;
  }
`;

const Preview = styled.section`
  position: absolute;
  left: 442px;
  top: 498px;
  right: 6px;
  height: 156px;
  background: #fff;
  border: 1px solid #c4c4c4;
  border-width: 1px 0 1px 1px;
  font-family: 'DejaVu Sans Mono', 'Liberation Mono', monospace;
  color: #808080;
`;

const PreviewList = styled.div`
  height: 99px;
  padding: 13px 0 0 33px;
  border-bottom: 1px solid #c4c4c4;
  font-size: 22px;
  line-height: 28px;
`;

const PreviewItem = styled.div`
  display: flex;
  align-items: center;
  height: 42px;

  svg {
    align-self: flex-end;
    margin-left: -5px;
  }
`;

const ItemIndex = styled.em`
  width: 42px;
  height: 23px;
  margin: 0 8px 0 28px;
  background: #d3d3d3;
  font-size: 20px;
  line-height: 23px;
  text-align: center;
`;

const ItemId = styled.span`
  margin-left: auto;
  margin-right: 58px;
  width: 100px;
  background: #ccffcc;
  font-family: 'Open Sans', sans-serif;
  font-size: 24px;
  line-height: 31px;
  text-align: center;
`;

const PreviewLevels = styled.div`
  display: flex;
  align-items: center;
  gap: 8px;
  height: 54px;
  padding: 0 14px 0 18px;
  font-size: 17px;

  b {
    font-weight: 400;
    color: #222;
  }
  em {
    margin-left: auto;
    font-size: 20px;
  }
  em b {
    color: #8b0000;
  }
`;

const Callout = styled.div`
  position: absolute;
  left: ${(p) => p.$x}px;
  top: 184px;
  display: flex;
  flex-direction: column;
  align-items: center;
  width: 40px;
  color: ${TEAL};
  font-size: 34px;
  font-weight: 700;
  line-height: 34px;
  pointer-events: none;

  i {
    width: 5px;
    height: ${(p) => p.$length}px;
    margin-top: 12px;
    background: ${TEAL};
  }
  i + i {
    width: 11px;
    height: 11px;
    margin-top: -2px;
    border-radius: 50%;
  }
`;

const DynFooter = styled.footer`
  display: flex;
  align-items: center;
  flex: none;
  height: 49px;
  padding: 0 2px 0 4px;
  background: linear-gradient(#232323, #0c0c0c);
  color: #8a8a8a;
`;

const RunMode = styled(SelectFrame)`
  font-size: 14px;

  select {
    padding: 0 24px 0 7px;
  }
  i {
    right: 9px;
    border-top-color: #9a9a9a;
  }
`;

const RunStatus = styled.em`
  margin-left: 103px;
`;

const GRID_A = Array.from({ length: 110 }, (_, k) => k - 24);
const GRID_B = Array.from({ length: 82 }, (_, k) => k - 12);

// floor grid: one set of lines meets at (1310,324), the other far right on the horizon
const FloorGrid = () => (
  <Backdrop width="861" height="888" viewBox="1052 109 861 888" fill="none" shapeRendering="crispEdges">
    <defs>
      <clipPath id="floor">
        <path d="M1052 541L1440 524L1885 522L1914 532V998H1052z" />
      </clipPath>
    </defs>
    <g clipPath="url(#floor)">
      {GRID_A.map((k) => (
        <path
          key={`a${k}`}
          d={`M1310 324L${1310 + (1100 + 28.3 * k - 1310) * 1.2} 1131`}
          stroke={k % 5 === 0 ? '#8fa6b4' : '#b4d3e6'}
          strokeDasharray={k % 5 === 0 ? '7 5' : '9 5'}
          strokeDashoffset={k * 5}
        />
      ))}
      {GRID_B.map((k) => {
        const y = 300 + 1 / (0.001447 + 0.0000398 * k);
        return (
          <path
            key={`b${k}`}
            d={`M1053 ${y}L6000 300`}
            stroke={k % 5 === 0 ? '#8fa6b4' : '#b4d3e6'}
            strokeDasharray={k < 25 ? '6 4' : '11 7'}
            strokeDashoffset={k * 7}
          />
        );
      })}
    </g>
    <path d="M1453 525L1514 605" stroke="#2f9e2f" />
    <path d="M1907 669h6" stroke="#e02020" />
    <g shapeRendering="auto">
      <path d="M1426 521.500h97" stroke="#444" strokeWidth="6" />
      <circle cx="1425" cy="521.500" r="8" fill="#444" />
      <circle cx="1522" cy="521.500" r="8" fill="#444" />
    </g>
  </Backdrop>
);

const CanvasControls = () => (
  <Controls>
    <ControlGroup $row>
      <button aria-label="geometry">
        <svg width="38" height="16" viewBox="0 0 38 16" fill="none" stroke="#757575">
          <circle cx="7" cy="9" r="5.500" />
          <path d="M13 1.500l7 10H6zM24.500 5.500h9v9h-9zM24.500 5.500l4-4h9v9l-4 4M33.500 5.500l4-4" />
        </svg>
      </button>
      <button aria-label="graph">
        <svg width="38" height="16" viewBox="0 0 38 16" fill="#cfe6fb" stroke="#1488e8">
          <path d="M10 4l16 5M17 13c5 0 4-4 9-4" fill="none" />
          <path d="M.5 1.500h9v6h-9zM26.500 3.500h11v8h-11zM6.500 11.500h10v3h-10z" />
          <path d="M.5 2.500h9M26.500 4.500h11" strokeWidth="2" />
        </svg>
      </button>
    </ControlGroup>
    <ControlGroup>
      <button aria-label="fit"><Icon name="fit" size={12} /></button>
      <button aria-label="zoom in"><Icon name="plus" size={11} /></button>
      <button aria-label="zoom out"><Icon name="minus" size={11} /></button>
    </ControlGroup>
    <ControlGroup>
      <button aria-label="pan"><Icon name="pan" size={14} /></button>
    </ControlGroup>
  </Controls>
);

const DynamoWindow = () => {
  const [category, setCategory] = useState('Objem');

  return (
    <Dynamo>
      <DynTitle>
        <Icon name="revit" />
        Dynamo
        <Spacer />
        <WindowButton aria-label="Minimalizovat"><Icon name="winMin" /></WindowButton>
        <WindowButton aria-label="Maximalizovat"><Icon name="winMax" /></WindowButton>
        <WindowButton aria-label="Zavřít"><Icon name="winClose" /></WindowButton>
      </DynTitle>
      <DynMenu>
        {['Soubor', 'Upravit', 'Zobrazit', 'Balíčky', 'Nastavení', 'Nápověda'].map((m) => (
          <button key={m}>{m}</button>
        ))}
      </DynMenu>
      <DynTools>
        {['newFile', 'openFile', 'disk', 'undoD', 'redoD'].map((name) => (
          <DynTool key={name} aria-label={name}><Icon name={name} /></DynTool>
        ))}
        <Spacer />
        <DynTool $w={40} aria-label="export"><Icon name="camera" size={20} /></DynTool>
      </DynTools>
      <DynTabs>
        <DynTab>
          Home*
          <button aria-label="Zavřít kartu"><Icon name="close" size={10} /></button>
        </DynTab>
        <button aria-label="Karty"><Icon name="burger" size={12} /></button>
      </DynTabs>
      <Canvas>
        <FloorGrid />
        <LibraryTab>
          <Icon name="arrow" size={11} />
          <span>Knihovna</span>
        </LibraryTab>
        <CanvasControls />
        <Node $x={34} $y={329} $w={340}>
          <NodeTitle>Categories</NodeTitle>
          <NodePorts $end>
            <Port $w={132}>Category</Port>
          </NodePorts>
        </Node>
        <CategorySelect $w={209} $h={57}>
          <select aria-label="Categories" value={category} onChange={(e) => setCategory(e.target.value)}>
            <option>Objem</option>
          </select>
          <Icon name="down" size={16} />
        </CategorySelect>
        <Node $x={469} $y={326} $w={360} $selected>
          <NodeTitle>All Elements of Category</NodeTitle>
          <NodePorts>
            <Port $w={132}>Category</Port>
            <Port $w={139}>Elements</Port>
          </NodePorts>
        </Node>
        <Preview>
          <PreviewList>
            List
            <PreviewItem>
              <svg width="11" height="44" viewBox="0 0 11 44">
                <path d="M5.500 0v40" stroke="#bfbfbf" strokeWidth="2" />
                <circle cx="5.500" cy="38.500" r="5" fill="#bfbfbf" />
              </svg>
              <ItemIndex>0</ItemIndex>
              BldgMass
              <ItemId>286965</ItemId>
            </PreviewItem>
          </PreviewList>
          <PreviewLevels>
            <span>@<b>L2</b></span>
            <span>@<b>L1</b></span>
            <em>{'{'}<b>1</b>{'}'}</em>
          </PreviewLevels>
        </Preview>
        <Callout $x={115} $length={141}>1<i /><i /></Callout>
        <Callout $x={630} $length={86}>2<i /><i /></Callout>
      </Canvas>
      <DynFooter>
        <RunMode $w={120} $h={38} $bg="#2b2b2b" $line="#484848" $color="#b8b8b8">
          <select aria-label="Spuštění" defaultValue="Automaticky">
            <option>Automaticky</option>
          </select>
          <Caret $size={4} />
        </RunMode>
        <RunStatus>Spuštění bylo dokončeno.</RunStatus>
        <Spacer />
        <svg width="12" height="46" viewBox="0 0 12 46">
          <path d="M9 35h2M9 38h2M6 38h2M9 41h2M6 41h2M3 41h2M9 44h2M6 44h2M3 44h2M0 44h2" stroke="#e0e0e0" strokeWidth="2" />
        </svg>
      </DynFooter>
    </Dynamo>
  );
};

const App = () => (
  <>
    <GlobalStyle />
    <Desktop>
      <RevitWindow />
      <DynamoWindow />
    </Desktop>
  </>
);

export default App;
